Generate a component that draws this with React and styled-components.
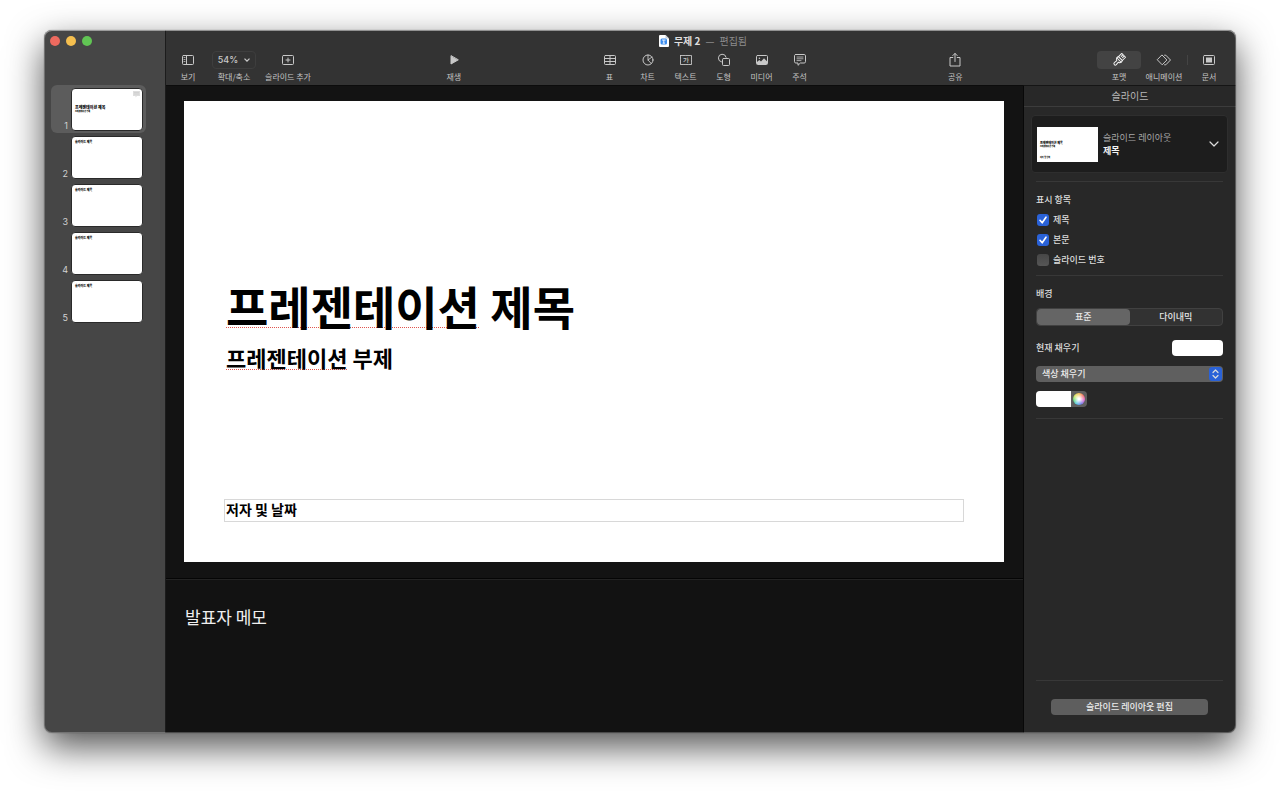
import React, { useState } from 'react'
import styled, { createGlobalStyle } from 'styled-components'

const GlobalStyle = createGlobalStyle`
  * {
    box-sizing: border-box;
  }
  body {
    margin: 0;
    background: #ffffff;
    font-family: 'Noto Sans CJK KR', 'Noto Sans', sans-serif;
  }
  button, input, select, textarea {
    margin: 0;
    padding: 0;
    border: 0;
    background: none;
    color: inherit;
    font: inherit;
  }
`
const Desktop = styled.div`
  display: flex;
  min-height: 100vh;
  padding: 30px 44px 58px;
  overflow: hidden;
`
const Window = styled.div`
  position: relative;
  display: flex;
  flex: 1;
  overflow: hidden;
  border-radius: 8px;
  color: #dcdcdc;
  font-size: 9px;
  line-height: 12px;
`
const Shadow = styled.div`
  display: flex;
  flex: 1;
  border-radius: 8px;
  box-shadow:
    0 0 1px rgba(0, 0, 0, 0.5),
    0 14px 36px rgba(0, 0, 0, 0.68);
`
const Edge = styled.div`
  position: absolute;
  inset: 0;
  border-radius: 8px;
  pointer-events: none;
  box-shadow:
    inset 0 1px 0 rgba(255, 255, 255, 0.3),
    inset 0 0 0 1px rgba(255, 255, 255, 0.24);
`

/* sidebar */
const Sidebar = styled.aside`
  flex: none;
  width: 122px;
  background: #464646;
  border-right: 1px solid #1c1c1c;
`
const Lights = styled.div`
  display: flex;
  gap: 6px;
  height: 55px;
  padding: 6px 6px 0;
`
const Light = styled.button`
  width: 10px;
  height: 10px;
  border-radius: 50%;
  background: ${(props) => props.$color};
`
const SlideList = styled.ol`
  margin: 0;
  padding: 0 19px 0 7px;
  list-style: none;
`
const SlideRow = styled.li`
  display: flex;
  align-items: flex-end;
  justify-content: flex-end;
  gap: 3px;
  height: 48px;
  padding: 3px 3px 2px;
  border-radius: 6px;
  background: ${(props) => (props.$selected ? '#5c5c5c' : 'transparent')};
`
const SlideNumber = styled.span`
  font-family: Inter, sans-serif;
  font-size: 9px;
  line-height: 10px;
  color: #d2d2d2;
`
const Thumb = styled.button`
  display: flex;
  flex-direction: column;
  position: relative;
  width: 72px;
  height: 43px;
  padding: ${(props) => (props.$cover ? '16px 3px 0' : '3px 3px 0')};
  border: 1px solid #2a2a2a;
  border-radius: 4px;
  background: #ffffff;
  color: #000000;
  text-align: left;
  font-size: ${(props) => (props.$cover ? '4px' : '3px')};
  line-height: 5px;
  font-weight: 900;
`
const ThumbSub = styled.span`
  font-size: 2px;
  line-height: 4px;
`
const NoteMark = styled.svg`
  position: absolute;
  top: 2px;
  right: 2px;
`

/* toolbar */
const Main = styled.div`
  display: flex;
  flex: 1;
  flex-direction: column;
  min-width: 0;
`
const Header = styled.header`
  height: 55px;
  background: #333333;
`
const TitleBar = styled.div`
  display: flex;
  align-items: center;
  justify-content: center;
  gap: 5px;
  height: 21px;
  padding-left: 4px;
  font-size: 10px;
  font-weight: 700;
  color: #dedede;
`
const Edited = styled.span`
  font-weight: 400;
  color: #8c8c8c;
`
const Toolbar = styled.div`
  display: flex;
  justify-content: space-between;
  padding: 0 10px 0 6px;
`
const Group = styled.div`
  display: flex;
  gap: ${(props) => props.$gap}px;
`
const Tool = styled.button`
  display: flex;
  flex-direction: column;
  align-items: center;
  gap: 2px;
  width: ${(props) => props.$width}px;
  font-size: 8px;
  line-height: 12px;
  white-space: nowrap;
  color: #c4c4c4;
`
const ToolFace = styled.span`
  display: flex;
  align-items: center;
  justify-content: center;
  gap: 6px;
  width: 100%;
  height: 18px;
  border: 1px solid ${(props) => (props.$outlined ? '#3e3e3e' : 'transparent')};
  border-radius: 4px;
  background: ${(props) => (props.$active ? '#434343' : 'transparent')};
  color: ${(props) => (props.$active ? '#f0f0f0' : '#c8c8c8')};
  font-family: Inter, sans-serif;
  font-size: 9px;
  font-weight: 500;
`
const ToolDivider = styled.span`
  width: 1px;
  height: 10px;
  margin-top: 4px;
  background: #444444;
`

/* canvas and notes */
const Workspace = styled.div`
  display: flex;
  flex: 1;
`
const Stage = styled.main`
  display: flex;
  flex: 1;
  flex-direction: column;
  min-width: 0;
  background: #131313;
`
const Canvas = styled.section`
  padding: 15px 19px 16px 18px;
  border-top: 1px solid #0c0c0c;
  border-bottom: 1px solid #050505;
`
const Slide = styled.div`
  display: flex;
  flex-direction: column;
  aspect-ratio: 16 / 9;
  padding: 176px 40px 40px;
  background: #ffffff;
  color: #000000;
`
const SlideTitle = styled.h1`
  margin: 0;
  padding-left: 2px;
  font-size: 46px;
  line-height: 56px;
  font-weight: 700;
`
const SlideSubtitle = styled.h2`
  margin: 10px 0 0;
  padding-left: 2px;
  font-size: 22px;
  line-height: 28px;
  font-weight: 700;
`
const Misspelled = styled.span`
  text-decoration: underline dotted #e0554e 1px;
  text-decoration-skip-ink: none;
  text-underline-offset: 2px;
`
const AuthorBox = styled.input`
  width: 100%;
  height: 23px;
  margin-top: auto;
  padding: 0 1px 3px;
  border: 1px solid #d8d8d8;
  font-size: 14px;
  font-weight: 700;
`
const Notes = styled.textarea`
  flex: 1;
  width: 100%;
  padding: 25px 19px;
  border-top: 1px solid #232323;
  outline: none;
  resize: none;
  background: #121212;
  color: #efefef;
  font-size: 17px;
  line-height: 24px;
`

/* inspector */
const Inspector = styled.aside`
  display: flex;
  flex: none;
  flex-direction: column;
  width: 213px;
  border-top: 1px solid #151515;
  border-left: 1px solid #080808;
  background: #282828;
`
const InspectorTitle = styled.div`
  height: 21px;
  border-bottom: 1px solid #3c3c3c;
  font-size: 10px;
  line-height: 20px;
  text-align: center;
  color: #b8b8b8;
`
const LayoutCard = styled.button`
  display: flex;
  align-items: center;
  gap: 5px;
  height: 58px;
  margin: 8px 8px 8px 7px;
  padding: 0 8px 0 5px;
  border: 1px solid #2e2e2e;
  border-radius: 4px;
  background: #1d1d1d;
  text-align: left;
`
const LayoutPreview = styled.span`
  display: flex;
  flex-direction: column;
  width: 61px;
  height: 35px;
  padding: 14px 3px 0;
  background: #ffffff;
  color: #000000;
  font-size: 3px;
  line-height: 4px;
  font-weight: 900;
`
const PreviewAuthor = styled.span`
  margin-top: 7px;
  font-size: 2px;
`
const LayoutName = styled.span`
  flex: 1;
  line-height: 13px;
  color: #a8a8a8;
`
const Strong = styled.strong`
  display: block;
  color: #f4f4f4;
`
const Section = styled.section`
  margin: 0 13px 0 12px;
  padding: 12px 0 ${(props) => props.$bottom}px;
  border-top: 1px solid #383838;
`
const SectionTitle = styled.h3`
  margin: 0 0 ${(props) => props.$gap}px;
  font-size: 9px;
  line-height: 12px;
  font-weight: 500;
`
const CheckRow = styled.label`
  display: flex;
  align-items: center;
  gap: 4px;
  height: 20px;
  padding-left: 1px;
  font-weight: 500;
`
const Checkbox = styled.input`
  appearance: none;
  width: 12px;
  height: 12px;
  border-radius: 3px;
  background: linear-gradient(#474747, #565656);

  &:checked {
    background: #2a62d8
      url("data:image/svg+xml,%3Csvg xmlns='http://www.w3.org/2000/svg' viewBox='0 0 12 12'%3E%3Cpath d='M3 6.3 5.2 8.8 9 3.2' fill='none' stroke='white' stroke-width='1.6' stroke-linecap='round' stroke-linejoin='round'/%3E%3C/svg%3E");
  }
`
const Segmented = styled.div`
  display: flex;
  height: 18px;
  border: 1px solid #414141;
  border-radius: 4px;
  background: #323232;
`
const Segment = styled.button`
  flex: 1;
  border-radius: 4px;
  background: ${(props) => (props.$active ? '#656565' : 'transparent')};
  line-height: 14px;
  font-weight: 500;
  color: #e6e6e6;
`
const FillRow = styled.div`
  display: flex;
  align-items: center;
  justify-content: space-between;
  height: 16px;
  margin: 14px 0 10px;
  font-weight: 500;
`
const Swatch = styled.button`
  width: 51px;
  height: 16px;
  border-radius: 4px;
  background: #ffffff;
`
const SelectWrap = styled.div`
  display: flex;
  align-items: center;
  height: 16px;
  border-radius: 4px;
  background: #5f5f5f;
`
const Select = styled.select`
  appearance: none;
  flex: 1;
  height: 16px;
  padding: 0 6px 1px;
  outline: none;
  line-height: 14px;
  font-weight: 500;
  color: #ececec;
`
const SelectArrows = styled.span`
  display: flex;
  align-items: center;
  justify-content: center;
  width: 13px;
  height: 14px;
  margin-right: 1px;
  border-radius: 3px;
  background: #2a62d8;
  pointer-events: none;
`
const ColorPicker = styled.div`
  display: flex;
  width: 51px;
  height: 16px;
  margin-top: 9px;
  overflow: hidden;
  border-radius: 4px;
  background: #5f5f5f;
`
const ColorWell = styled.button`
  width: 35px;
  background: #ffffff;
`
const ColorWheel = styled.button`
  width: 12px;
  height: 12px;
  margin: 2px;
  border-radius: 50%;
  background:
    radial-gradient(#ffffff 10%, rgba(255, 255, 255, 0) 75%),
    conic-gradient(#f5b83d, #ee5a5a, #d652c8, #5a67e8, #46bfe8, #53d86a, #d3e04c, #f5b83d);
`
const Footer = styled.footer`
  flex: 1;
  display: flex;
  flex-direction: column;
  justify-content: flex-end;
  margin: 0 13px 0 12px;
  border-top: 1px solid #383838;
`
const FooterBar = styled.div`
  padding: 18px 15px;
  border-top: 1px solid #383838;
`
const FooterButton = styled.button`
  display: block;
  width: 100%;
  height: 16px;
  border-radius: 4px;
  background: #5e5e5e;
  line-height: 14px;
  font-weight: 500;
  color: #ececec;
`

const Icon = ({ width = 14, height = 14, children }) => (
  <svg
    width={width}
    height={height}
    viewBox={`0 0 ${width} ${height}`}
    fill="none"
    stroke="currentColor"
    strokeLinejoin="round"
    strokeLinecap="round"
    aria-hidden="true"
  >
    {children}
  </svg>
)

const icons = {
  view: (
    <Icon>
      <rect x="1.5" y="2.5" width="11" height="9" rx="1" />
      <path d="M5.5 2.5v9" />
      <path d="M3 4.5h1M3 6.5h1M3 8.5h1" strokeWidth="0.8" />
    </Icon>
  ),
  addSlide: (
    <Icon>
      <rect x="1.5" y="2.5" width="11" height="9" rx="1" />
      <path d="M7 5v4M5 7h4" />
    </Icon>
  ),
  play: (
    <Icon>
      <path d="M4 3v8l7-4z" fill="currentColor" />
    </Icon>
  ),
  table: (
    <Icon>
      <rect x="1.5" y="2.5" width="11" height="9" rx="1" />
      <path d="M1.5 5.5h11M1.5 8.5h11M7 2.5v9" />
    </Icon>
  ),
  chart: (
    <Icon>
      <circle cx="7" cy="7" r="5" />
      <path d="M7 2v5l3.3 3.6M7 7l4-3" strokeWidth="0.9" />
    </Icon>
  ),
  text: (
    <Icon>
      <rect x="1.5" y="2.5" width="11" height="9" strokeDasharray="2 0.6" strokeWidth="0.9" />
      <text x="7" y="9.2" textAnchor="middle" fontSize="6" fontWeight="700" fill="currentColor" stroke="none">
        가
      </text>
    </Icon>
  ),
  shape: (
    <Icon>
      <path d="M4.4 8.9A3.9 3.9 0 1 1 9.1 4.2" />
      <rect x="5.5" y="5.5" width="7" height="7" rx="1" />
    </Icon>
  ),
  media: (
    <Icon>
      <rect x="1.5" y="2.5" width="11" height="9" rx="1" />
      <circle cx="4.4" cy="5.3" r="0.8" fill="currentColor" stroke="none" />
      <path d="M2 11V9l2.3-2 1.7 1.5L9 5.3l3.2 3.2V11z" fill="currentColor" stroke="none" />
    </Icon>
  ),
  comment: (
    <Icon>
      <path d="M2.8 1.5h8.4c.8 0 1.3.5 1.3 1.3v5.9c0 .8-.5 1.3-1.3 1.3H7.4L5 12.3V10H2.8c-.8 0-1.3-.5-1.3-1.3V2.8c0-.8.5-1.3 1.3-1.3z" />
      <path d="M4 4h6M4 5.8h6M4 7.6h4" strokeWidth="0.8" />
    </Icon>
  ),
  share: (
    <Icon height={16}>
      <path d="M4.8 5.5H2V14h10V5.5H9.2M7 9.5v-8M4.8 3.6 7 1.4l2.2 2.2" />
    </Icon>
  ),
  format: (
    <Icon>
      <g transform="rotate(45 7 7)">
        <path d="M4.3 5V.4h5.400V5M6.100.6v2.200M7.900.6v2.200" />
        <rect x="4" y="5" width="6" height="2" />
        <path d="M4 7c0 1.300.8 1.700 1.900 2l-.3 3.200a1.400 1.400 0 0 0 2.800 0L8.100 9c1.100-.3 1.900-.7 1.900-2" />
      </g>
    </Icon>
  ),
  animate: (
    <Icon width={16}>
      <path d="M6.2 2.2 10.900 7l-4.700 4.800L1.500 7z" />
      <path d="M8.600 2.200h1.200L14.500 7l-4.700 4.800H8.600" />
    </Icon>
  ),
  document: (
    <Icon>
      <rect x="1.5" y="2.5" width="11" height="9" rx="1" />
      <rect x="4" y="4.5" width="6" height="5" fill="currentColor" stroke="none" />
    </Icon>
  ),
}

const insertTools = [
  { id: 'table', label: '표' },
  { id: 'chart', label: '차트' },
  { id: 'text', label: '텍스트' },
  { id: 'shape', label: '도형' },
  { id: 'media', label: '미디어' },
  { id: 'comment', label: '주석' },
]

function ToolButton({ id, label, width = 28, active, outlined, children }) {
  return (
    <Tool type="button" $width={width}>
      <ToolFace $active={active} $outlined={outlined}>
        {children || icons[id]}
      </ToolFace>
      {label}
    </Tool>
  )
}

function SlideNavigator({ selected, onSelect }) {
  return (
    <Sidebar>
      <Lights>
        <Light type="button" aria-label="닫기" $color="#ed6a5f" />
        <Light type="button" aria-label="최소화" $color="#f5bf4f" />
        <Light type="button" aria-label="확대" $color="#61c554" />
      </Lights>
      <SlideList>
        {[1, 2, 3, 4, 5].map((number) => (
          <SlideRow key={number} $selected={number === selected}>
            <SlideNumber>{number}</SlideNumber>
            <Thumb type="button" $cover={number === 1} onClick={() => onSelect(number)}>
              {number === 1 ? '프레젠테이션 제목' : '슬라이드 제목'}
              {number === 1 && (
                <>
                  <ThumbSub>프레젠테이션 부제</ThumbSub>
                  <NoteMark width="7" height="7" viewBox="0 0 7 7" aria-hidden="true">
                    <path d="M0 0h7v5H4L2.5 6.5V5H0z" fill="#dddddd" />
                    <path d="M1 1.5h5M1 3h5" stroke="#c4c4c4" strokeWidth="0.5" />
                  </NoteMark>
                </>
              )}
            </Thumb>
          </SlideRow>
        ))}
      </SlideList>
    </Sidebar>
  )
}

function WindowHeader() {
  return (
    <Header>
      <TitleBar>
        <svg width="10" height="12" viewBox="0 0 10 12" aria-hidden="true">
          <path d="M1 0h5.5L10 3.5V11a1 1 0 0 1-1 1H1a1 1 0 0 1-1-1V1a1 1 0 0 1 1-1z" fill="#ffffff" />
          <path d="M6.5 0 10 3.5H6.5z" fill="#c9d0d8" />
          <rect x="1.5" y="3.5" width="6.5" height="6" rx="1.5" fill="#3b8df0" />
          <path d="M3 5h3.6M4.8 5v3M3.7 8.2h2.2" stroke="#ffffff" strokeWidth="0.9" />
        </svg>
        <span>무제 2</span>
        <Edited>—</Edited>
        <Edited>편집됨</Edited>
      </TitleBar>
      <Toolbar>
        <Group $gap={8}>
          <ToolButton id="view" label="보기" width={32} />
          <ToolButton label="확대/축소" width={44} outlined>
            54%
            <svg width="6" height="4" viewBox="0 0 6 4" fill="none" stroke="currentColor" strokeWidth="1.3" aria-hidden="true">
              <path d="M0.5 0.6 3 3.1 5.5 0.6" />
            </svg>
          </ToolButton>
          <ToolButton id="addSlide" label="슬라이드 추가" width={48} />
        </Group>
        <ToolButton id="play" label="재생" />
        <Group $gap={10}>
          {insertTools.map((tool) => (
            <ToolButton key={tool.id} id={tool.id} label={tool.label} />
          ))}
        </Group>
        <ToolButton id="share" label="공유" />
        <Group $gap={4}>
          <ToolButton id="format" label="포맷" width={44} active />
          <ToolButton id="animate" label="애니메이션" width={38} />
          <ToolDivider />
          <ToolButton id="document" label="문서" width={34} />
        </Group>
      </Toolbar>
    </Header>
  )
}

function SlideInspector() {
  const [background, setBackground] = useState('표준')

  return (
    <Inspector>
      <InspectorTitle>슬라이드</InspectorTitle>
      <LayoutCard type="button">
        <LayoutPreview>
          프레젠테이션 제목
          <ThumbSub>프레젠테이션 부제</ThumbSub>
          <PreviewAuthor>저자 및 날짜</PreviewAuthor>
        </LayoutPreview>
        <LayoutName>
          슬라이드 레이아웃
          <Strong>제목</Strong>
        </LayoutName>
        <Icon width={10} height={6}>
          <path d="M1 1l4 4 4-4" strokeWidth="1.2" />
        </Icon>
      </LayoutCard>
      <Section $bottom={5}>
        <SectionTitle $gap={4}>표시 항목</SectionTitle>
        <CheckRow>
          <Checkbox type="checkbox" defaultChecked />
          제목
        </CheckRow>
        <CheckRow>
          <Checkbox type="checkbox" defaultChecked />
          본문
        </CheckRow>
        <CheckRow>
          <Checkbox type="checkbox" />
          슬라이드 번호
        </CheckRow>
      </Section>
      <Section $bottom={11}>
        <SectionTitle $gap={8}>배경</SectionTitle>
        <Segmented>
          {['표준', '다이내믹'].map((name) => (
            <Segment
              key={name}
              type="button"
              $active={background === name}
              onClick={() => setBackground(name)}
            >
              {name}
            </Segment>
          ))}
        </Segmented>
        <FillRow>
          현재 채우기
          <Swatch type="button" aria-label="현재 채우기" />
        </FillRow>
        <SelectWrap>
          <Select aria-label="채우기 유형">
            <option>색상 채우기</option>
          </Select>
          <SelectArrows>
            <Icon width={7} height={10}>
              <path d="M1 3.5 3.5 1 6 3.5M1 6.5 3.5 9 6 6.5" strokeWidth="1.2" />
            </Icon>
          </SelectArrows>
        </SelectWrap>
        <ColorPicker>
          <ColorWell type="button" aria-label="색상" />
          <ColorWheel type="button" aria-label="색상 휠" />
        </ColorPicker>
      </Section>
      <Footer>
        <FooterBar>
          <FooterButton type="button">슬라이드 레이아웃 편집</FooterButton>
        </FooterBar>
      </Footer>
    </Inspector>
  )
}

function App() {
  const [selected, setSelected] = useState(1)

  return (
    <Desktop>
      <GlobalStyle />
      <Shadow>
        <Window>
          <SlideNavigator selected={selected} onSelect={setSelected} />
          <Main>
            <WindowHeader />
            <Workspace>
              <Stage>
                <Canvas>
                  <Slide>
                    <SlideTitle>
                      <Misspelled>프레젠테이션</Misspelled> 제목
                    </SlideTitle>
                    <SlideSubtitle>
                      <Misspelled>프레젠테이션</Misspelled> 부제
                    </SlideSubtitle>
                    <AuthorBox aria-label="저자 및 날짜" defaultValue="저자 및 날짜" />
                  </Slide>
                </Canvas>
                <Notes aria-label="발표자 메모" defaultValue="발표자 메모" />
              </Stage>
              <SlideInspector />
            </Workspace>
          </Main>
          <Edge />
        </Window>
      </Shadow>
    </Desktop>
  )
}

export default App
